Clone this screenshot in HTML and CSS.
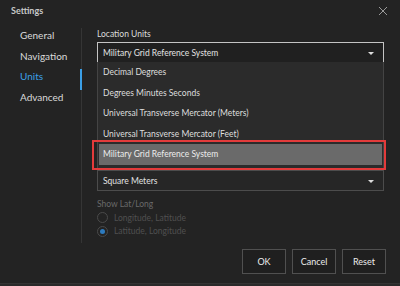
FILE: index.html
```html
<!DOCTYPE html>
<html>
<head>
<meta charset="utf-8">
<link rel="stylesheet" href="styles.css">
</head>
<body>
<div class="dialog">
  <div class="titlebar">
    <span class="title">Settings</span>
    <svg class="close" width="10" height="10" viewBox="0 0 10 10"><path d="M1 1L9 9M9 1L1 9" stroke="#9a9a9a" stroke-width="1" fill="none"/></svg>
  </div>
  <div class="main">
    <nav class="nav">
      <div class="nav-item">General</div>
      <div class="nav-item">Navigation</div>
      <div class="nav-item active">Units</div>
      <div class="nav-item">Advanced</div>
    </nav>
    <div class="content">
      <div class="field">
        <div class="label">Location Units</div>
        <div class="select-wrap">
          <div class="select open">
            <span>Military Grid Reference System</span>
            <span class="caret"></span>
          </div>
          <div class="list">
            <div class="option">Decimal Degrees</div>
            <div class="option">Degrees Minutes Seconds</div>
            <div class="option">Universal Transverse Mercator (Meters)</div>
            <div class="option">Universal Transverse Mercator (Feet)</div>
            <div class="option selected">Military Grid Reference System</div>
            <div class="highlight"></div>
          </div>
        </div>
      </div>
      <div class="field area">
        <div class="select">
          <span>Square Meters</span>
          <span class="caret"></span>
        </div>
      </div>
      <div class="field latlong">
        <div class="label dim">Show Lat/Long</div>
        <div class="radio"><span class="circle"></span><span>Longitude, Latitude</span></div>
        <div class="radio"><span class="circle checked"></span><span>Latitude, Longitude</span></div>
      </div>
    </div>
  </div>
  <div class="footer">
    <button class="btn">OK</button>
    <button class="btn">Cancel</button>
    <button class="btn">Reset</button>
  </div>
</div>
</body>
</html>
```

FILE: styles.css
```css
* { box-sizing: border-box; }
html, body { margin: 0; padding: 0; }
body {
  width: 400px;
  height: 286px;
  background: #2a2a2a;
  font-family: Lato, "Liberation Sans", sans-serif;
  overflow: hidden;
}
.dialog {
  width: 400px;
  height: 284px;
  background: #232323;
  border-bottom: 1px solid #333;
  position: relative;
}
.titlebar {
  height: 21px;
  display: flex;
  align-items: center;
  justify-content: space-between;
  padding: 0 12px 0 11px;
}
.title {
  font-size: 9px;
  font-weight: 700;
  color: #c8c8c8;
}
.close { display: block; }
.main {
  display: flex;
  height: 223px;
  padding-top: 7px;
}
.nav {
  width: 82px;
  border-right: 1px solid #353535;
  height: 215px;
  display: flex;
  flex-direction: column;
}
.nav-item {
  font-size: 10px;
  color: #dadada;
  height: 20.5px;
  line-height: 14px;
  padding-left: 20px;
  margin-right: -1px;
  border-right: 2px solid transparent;
}
.nav-item.active {
  color: #3b9fe6;
  border-right-color: #3b9fe6;
}
.content {
  flex: 1;
  padding: 0 16px 0 15px;
}
.label {
  font-size: 8.5px;
  color: #dcdcdc;
  line-height: 12px;
  margin-bottom: 2px;
}
.select-wrap { position: relative; }
.select {
  height: 21px;
  border: 1px solid #4c4c4c;
  background: #262626;
  display: flex;
  align-items: center;
  justify-content: space-between;
  padding: 0 9px 0 5px;
  font-size: 8.5px;
  color: #e2e2e2;
}
.select.open {
  border-color: #c4c4c4;
  background: #202020;
}
.caret {
  width: 0;
  height: 0;
  border-left: 3px solid transparent;
  border-right: 3px solid transparent;
  border-top: 3px solid #dcdcdc;
  margin-top: 1px;
}
.list {
  position: absolute;
  left: 0;
  right: 0;
  top: 20px;
  height: 108px;
  background: #2b2b2b;
  border: 1px solid #444;
  border-top: none;
  z-index: 2;
}
.option {
  height: 20.6px;
  line-height: 20.6px;
  padding-left: 5px;
  font-size: 8.5px;
  color: #dedede;
}
.option.selected {
  background: #6a6a6a;
  margin-left: 1px;
  margin-right: 1px;
  padding-left: 4px;
  color: #ececec;
}
.highlight {
  position: absolute;
  left: -6px;
  right: -3px;
  top: 78px;
  height: 30px;
  border: 2px solid #e33b3b;
}
.area { margin-top: 107px; }
.latlong { margin-top: 7px; }
.label.dim { color: #6a6a6a; margin-bottom: 1px; }
.radio {
  display: flex;
  align-items: center;
  height: 13.5px;
  font-size: 8.5px;
  color: #505050;
}
.circle {
  width: 11px;
  height: 11px;
  border: 1px solid #4a4a4a;
  border-radius: 50%;
  margin-right: 6px;
  display: flex;
  align-items: center;
  justify-content: center;
}
.circle.checked::after {
  content: "";
  width: 5px;
  height: 5px;
  border-radius: 50%;
  background: #2d7bbf;
}
.footer {
  display: flex;
  justify-content: flex-end;
  gap: 6px;
  padding: 5px 14px 0 0;
}
.btn {
  width: 44px;
  height: 25px;
  background: #1f1f1f;
  border: 1px solid #505050;
  color: #ececec;
  font-family: Lato, "Liberation Sans", sans-serif;
  font-size: 9px;
  padding: 0;
}
```
